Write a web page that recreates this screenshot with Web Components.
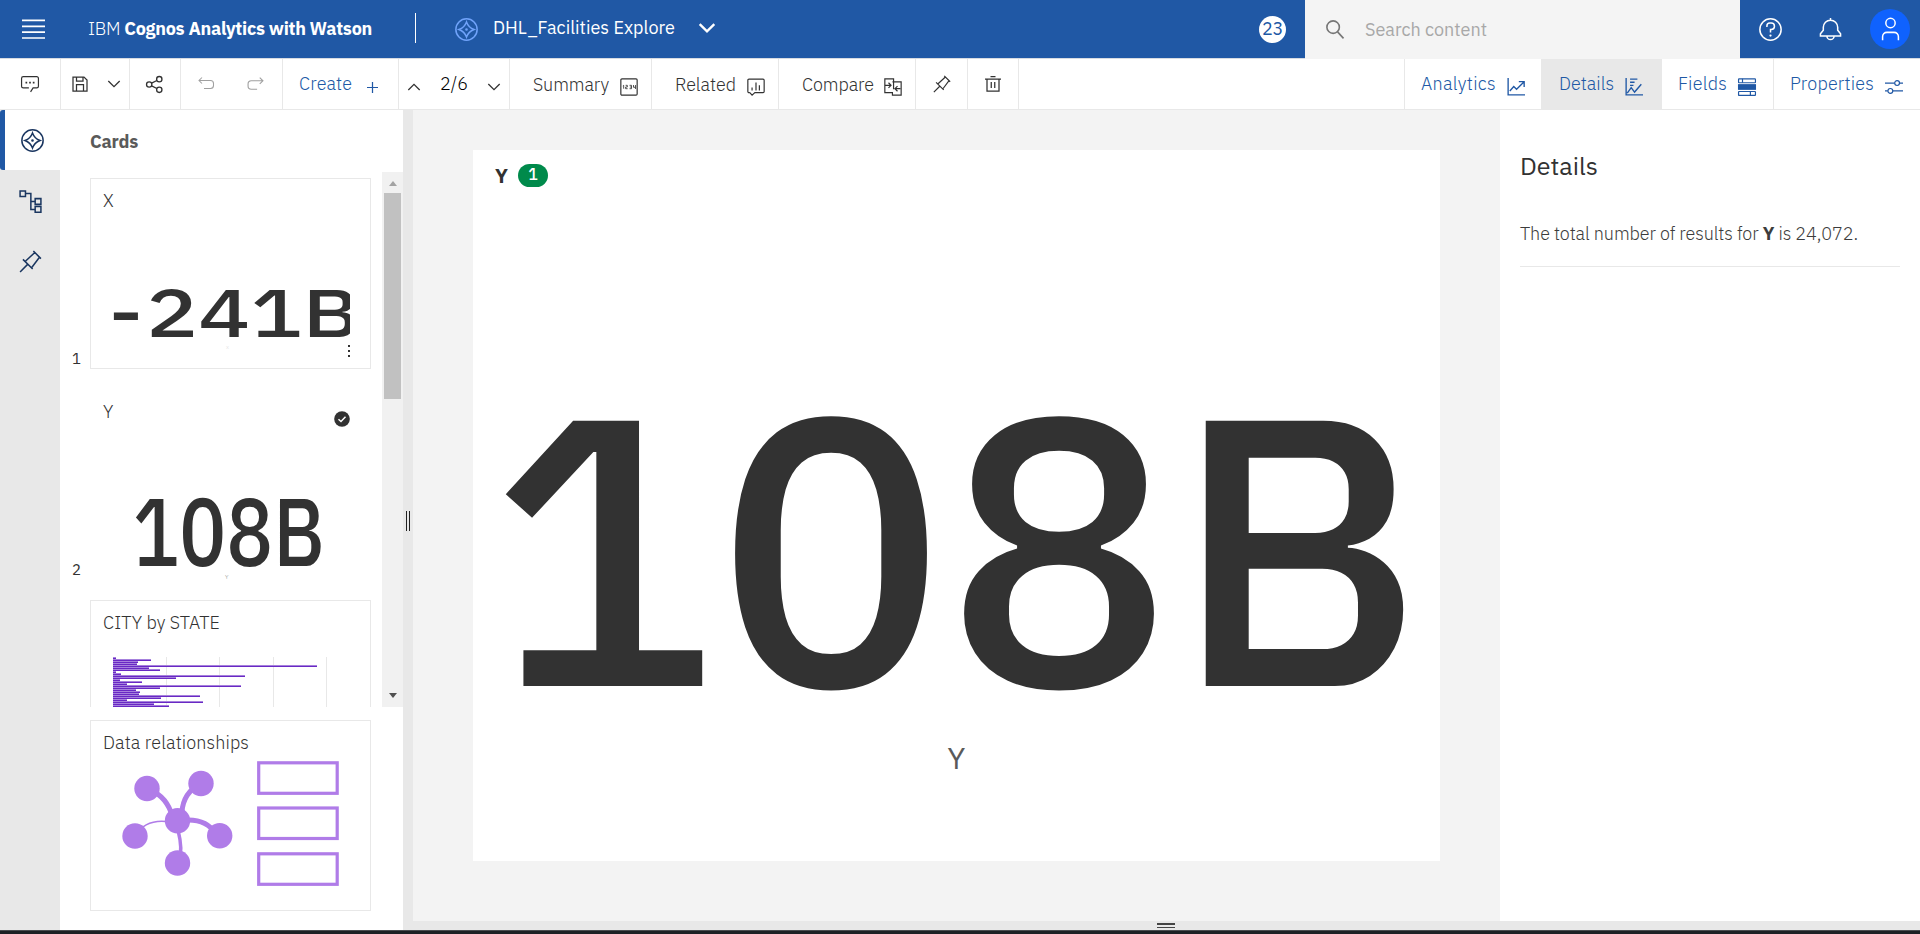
<!DOCTYPE html>
<html lang="en"><head><meta charset="utf-8"><title>DHL_Facilities Explore</title>
<style>html,body{margin:0;height:100%;overflow:hidden}body{font-family:"IBM Plex Sans",Roboto,"Open Sans",sans-serif;font-size:18px;font-weight:300;line-height:24px;color:#323232;background:#fff}</style></head>
<body><explore-app></explore-app>
<script>
const ICONS={
menu:'<path d="M0 2h32M0 10.2h32M0 18.2h32M0 26.4h32" stroke-width="2.3"/>',
explore:'<circle cx="16" cy="16" r="14.8"/><path d="M16 5.500C18 11 21 14 26.500 16C21 18 18 21 16 26.500C14 21 11 18 5.500 16C11 14 14 11 16 5.500Z"/><circle cx="16" cy="16" r=".8" fill="currentColor"/>',
comment:'<path d="M17 30l4.500-7H28a3 3 0 0 0 3-3V6a3 3 0 0 0-3-3H4a3 3 0 0 0-3 3v14a3 3 0 0 0 3 3h10"/><path d="M8 12h3v3H8zM14.500 12h3v3h-3zM21 12h3v3h-3z" fill="currentColor" stroke="none"/>',
save:'<path d="M2 2h22l6 6v22H2zM9 2v8h13V2M9 30V17h14v13"/>',
down:'<path d="M3 9l13 13L29 9"/>',up:'<path d="M3 23l13-13L29 23"/>',
share:'<circle cx="25" cy="6" r="5"/><circle cx="25" cy="26" r="5"/><circle cx="6" cy="16" r="5"/><path d="M10.500 13.500l10-5M10.500 18.500l10 5"/>',
undo:'<path d="M8 3L2 9l6 6M2 9h23a6 6 0 0 1 6 6v4a6 6 0 0 1-6 6H12"/>',
redo:'<path d="M24 3l6 6-6 6M30 9H8a6 6 0 0 0-6 6v4a6 6 0 0 0 6 6h11"/>',
plus:'<path d="M16 0v32M0 16h32" stroke-width="3.600"/>',
summary:'<rect x="1.500" y="1.500" width="29" height="29" rx="2"/><path d="M5 14l1.500-1V19M10 13h3v3h-3v3h3.500M17 13h3.500v6H17M17.500 16h3M24 12.500v4h3.500M27.500 12.500v7" stroke-width="1.500"/>',
related:'<path d="M5 26H3.500A2 2 0 0 1 1.500 24V4a2 2 0 0 1 2-2h25a2 2 0 0 1 2 2v20a2 2 0 0 1-2 2H14l-5 4.500L5 26M9 22v-5M16 22V8M22 22v-9"/>',
compare:'<path d="M16 26H1.500V1.500H17V7M15 7h15.500v23.500H15V26M17 7v13M2 13h10M8 8.500l4.500 4.500L8 17.500M29 19H20M24 14.500L19.500 19l4.500 4.500"/>',
pin:'<path d="M20 1.500l10.500 10.500M22 3.500l-13.500 12.500M28.500 10L18 24M5.500 13L19 26.500M12 20L1.500 30.500"/>',
trash:'<path d="M0 6h32M4 6v24h24V6M11 1h10M12.500 12v12M19.500 12v12"/>',
line:'<path d="M2 0v30h30M5 23l7-8 5 5L30 7M21 6.500h9.500V16"/>',
details:'<path d="M2 0v30h30M9 2h13M9 7.500h8M9 13h6M4 27l7-10 6 8 12-14"/>',
fields:'<rect x="1" y="1.500" width="30" height="7" rx="1"/><rect x="1" y="12" width="30" height="8" fill="currentColor"/><rect x="1" y="24" width="30" height="7" rx="1"/><path d="M8 1.500v7M22 24v7"/>',
sliders:'<path d="M0 9h17M26 9h6M0 23h5M14 23h18"/><circle cx="21.500" cy="9" r="4.300"/><circle cx="9.500" cy="23" r="4.300"/>',
search:'<circle cx="12" cy="12" r="10.500"/><path d="M19.500 20l10 11"/>',
help:'<circle cx="16" cy="16" r="14.800"/><path d="M11 12.500V11a4 4 0 0 1 4-4h2a4.500 4.500 0 0 1 0 9h-1v4"/><circle cx="16" cy="24.500" r="1.600" fill="currentColor" stroke="none"/>',
bell:'<path d="M16 0v4M2 25v-3l4-5v-4a10 10 0 0 1 20 0v4l4 5v3zM11 25a5 5 0 0 0 10 0"/>',
user:'<circle cx="16" cy="7" r="6.500"/><path d="M5 31v-5a6 6 0 0 1 6-6h10a6 6 0 0 1 6 6v5"/>',
tree:'<path d="M1.500 1.500h7.500v7.500h-7.500zM22.500 12h8v8h-8zM22.500 23h8v8h-8zM9 5h7.500v22h6M16.500 16h6"/>'
};
const make=(name,css,html,after)=>customElements.define(name,class extends HTMLElement{
 connectedCallback(){ if(this.shadowRoot)return; const r=this.attachShadow({mode:'open'}); r.innerHTML=`<style>*{box-sizing:border-box}${css}</style>`+(typeof html==='function'?html(this):html); after&&after(this,r); }
});
/* Text run whose tracking is adjusted to fill a given width */
make('fit-text',':host{display:block;white-space:nowrap;flex:none}span{display:inline-block}','<span><slot></slot></span>',(h,r)=>{
 const w=+h.getAttribute('w'); h.style.width=w+'px'; const s=r.querySelector('span'), n=h.textContent.length;
 if(n>1) s.style.letterSpacing=((w-s.getBoundingClientRect().width)/n).toFixed(3)+'px';
});
make('ui-icon',':host{display:block;flex:none}svg{display:block;overflow:visible}',h=>{const s=h.getAttribute('size')||18;return `<svg width="${s}" height="${s}" viewBox="0 0 32 32" fill="none" stroke="currentColor" stroke-width="${h.getAttribute('sw')||2.1}">${ICONS[h.getAttribute('name')]}</svg>`});

make('app-header',`:host{display:flex;height:59px;background:#2058a5;border-bottom:1px solid #d7dbe2;color:#fff;align-items:center}
b{font-weight:700}.div{width:1px;height:30px;background:#fff;margin:-2px 39px 0 43px}.count{width:27px;height:27px;border-radius:50%;background:#fff;color:#2058a5;display:grid;place-items:center;margin-left:auto;margin-right:19px}
.search{width:435px;height:59px;background:#f4f4f4;display:flex;align-items:center;padding:0 0 0 21px;gap:20px;color:#a8a8a8;margin-bottom:-1px;font-weight:400}.search ui-icon{color:#767676}
.act{width:180px;display:flex;align-items:center;padding-left:19px}.user{width:40px;height:40px;border-radius:50%;background:#0f62fe;display:grid;place-items:center;margin-left:28px}`,
`<ui-icon name="menu" size="23" style="margin:0 43px 0 22px;padding-top:2px"></ui-icon><fit-text w="284">IBM <b>Cognos Analytics with Watson</b></fit-text><div class="div"></div>
<ui-icon name="explore" size="23" style="color:#70a3fa"></ui-icon><fit-text w="182" style="margin:-2px 23px 0 15px;font-weight:400">DHL_Facilities Explore</fit-text><ui-icon name="down" size="18" sw="4.200" style="margin-top:-2px"></ui-icon>
<div class="count"><fit-text w="21" style="font-weight:400">23</fit-text></div><div class="search"><ui-icon name="search" size="19" sw="2.700"></ui-icon><fit-text w="122">Search content</fit-text></div>
<div class="act"><ui-icon name="help" size="23"></ui-icon><ui-icon name="bell" size="23" style="margin-left:37px"></ui-icon><div class="user"><ui-icon name="user" size="23"></ui-icon></div></div>`);

make('tool-item',`:host{display:flex;align-items:center;height:50px;border-right:1px solid #e8e8e8;flex:none;box-sizing:border-box}:host([selected]){background:#e8e8e8}`,'<slot></slot>',h=>{h.style.width=h.getAttribute('width')+'px';h.style.paddingLeft=h.getAttribute('pad')+'px'});
make('app-toolbar',`:host{display:flex;height:51px;border-bottom:1px solid #e8e8e8;background:#fff;box-sizing:border-box}.right{margin-left:auto;display:flex;border-left:1px solid #e8e8e8;color:#2058a5}
.right tool-item:last-child{border:0}.right ui-icon{margin:6px 0 0 11px}.l ui-icon{margin:5px 0 0 11px}.dim{color:#a0a0a0}`,
`<tool-item width="61" pad="21"><ui-icon name="comment"></ui-icon></tool-item>
<tool-item width="69" pad="11"><ui-icon name="save" size="16" sw="2.500"></ui-icon><ui-icon name="down" size="14" sw="3" style="margin-left:19px"></ui-icon></tool-item>
<tool-item width="51" pad="16"><ui-icon name="share" size="17" sw="2.500"></ui-icon></tool-item>
<tool-item width="102" pad="17" class="dim"><ui-icon name="undo" size="16"></ui-icon><ui-icon name="redo" size="17" style="margin-left:33px"></ui-icon></tool-item>
<tool-item width="116" pad="16" style="color:#2058a5"><fit-text w="53">Create</fit-text><ui-icon name="plus" size="11" style="margin:6px 0 0 15px"></ui-icon></tool-item>
<tool-item width="111" pad="8"><ui-icon name="up" size="14" sw="3" style="margin-top:5px"></ui-icon><fit-text w="28" style="margin:0 19px 0 19px;color:#000">2/6</fit-text><ui-icon name="down" size="14" sw="3" style="margin-top:5px"></ui-icon></tool-item>
<tool-item class="l" width="142" pad="23"><fit-text w="76" style="margin-top:2px">Summary</fit-text><ui-icon name="summary"></ui-icon></tool-item>
<tool-item class="l" width="127" pad="23"><fit-text w="61" style="margin-top:2px">Related</fit-text><ui-icon name="related"></ui-icon></tool-item>
<tool-item class="l" width="137" pad="23"><fit-text w="72" style="margin-top:2px">Compare</fit-text><ui-icon name="compare" style="margin-left:10px"></ui-icon></tool-item>
<tool-item width="52" pad="17"><ui-icon name="pin"></ui-icon></tool-item><tool-item width="51" pad="17"><ui-icon name="trash" size="16" sw="2.500"></ui-icon></tool-item>
<div class="right"><tool-item width="137" pad="16"><fit-text w="75">Analytics</fit-text><ui-icon name="line" sw="2.400"></ui-icon></tool-item>
<tool-item selected width="120" pad="17"><fit-text w="55">Details</fit-text><ui-icon name="details" sw="2.400"></ui-icon></tool-item>
<tool-item width="112" pad="16"><fit-text w="49">Fields</fit-text><ui-icon name="fields"></ui-icon></tool-item>
<tool-item width="146" pad="16"><fit-text w="84">Properties</fit-text><ui-icon name="sliders"></ui-icon></tool-item></div>`);

make('side-rail',`:host{display:flex;flex-direction:column;width:60px;background:#e8e8e8;color:#1a3660}div{height:60px;display:flex;align-items:center;padding-left:19px;flex:none}.on{background:#fff;border-left:5px solid #2058a5;padding-left:16px;border-radius:3px 0 0 3px}div+div{padding-top:2px}`,
`<div class="on"><ui-icon name="explore" size="23"></ui-icon></div><div><ui-icon name="tree" size="23"></ui-icon></div><div><ui-icon name="pin" size="23"></ui-icon></div>`);

/* Headline figure: viewBox given by the host, stretched to its box */
make('big-number',':host{display:block}svg{display:block;width:100%;height:100%;overflow:visible}:host([clip]) svg{overflow:hidden}text{font-weight:500;fill:#323232}',
h=>`<svg viewBox="${h.getAttribute('box')}" preserveAspectRatio="none"><text x="${h.getAttribute('xs')}" y="${h.getAttribute('base')}" font-size="${h.getAttribute('fs')}">${h.getAttribute('value')}</text></svg>`);

make('viz-card',`:host{display:grid;grid-template-columns:30px 281px;height:191px;margin-bottom:20px;flex:none}.no{font-size:15px;line-height:20px;align-self:end;padding:0 0 0 12px;font-weight:400}
.box{border:1px solid #e8e8e8;position:relative;height:191px;overflow:hidden;padding:10px 0 0 12px}:host([current]) .box{border-color:transparent}`,
h=>`<div class="no">${h.getAttribute('no')||''}</div><div class="box"><fit-text w="${h.getAttribute('tw')}">${h.getAttribute('label')}</fit-text><slot></slot></div>`);

const bars=[198,303,264,261,801,297,330,199,213,585,378,210,276,231,573,329,258,270,267,450,332,230,459,312,357,267];
make('bar-chart',':host{display:block}svg{display:block}',()=>`<svg width="230" height="60" viewBox="113 657 230 60" shape-rendering="crispEdges">${[166,219,273,326].map((x,i)=>`<path d="M${x+.5} 657v60" stroke="#e8e8e8" stroke-width="${i==3?1:1.6}"/>`).join('')}${bars.map((e,i)=>`<rect x="113" y="${657+2*i}" width="${(e/3-63).toFixed(1)}" height="2" fill="#a681dd"/><rect x="113" y="${657+2*i+1}" width="${(e/3-63).toFixed(1)}" height="1" fill="#6929c4"/>`).join('')}</svg>`);
make('relation-map',':host{display:block}svg{display:block}',()=>`<svg width="260" height="140" viewBox="100 755 260 140" fill="none" stroke="#b07ce8"><path d="M147 789Q164 794 171 812" stroke-width="5"/><path d="M201 783Q183 793 182 812" stroke-width="5"/><path d="M135 836Q146 818 170 822" stroke-width="1.500"/><path d="M177 821Q205 816 216 834" stroke-width="5"/><path d="M178 830Q183 850 179 860" stroke-width="3.500"/>
${[[177.5,820.7],[147,788.5],[201,783.5],[135,836],[219.700,835.700],[177.500,863]].map(p=>`<circle cx="${p[0]}" cy="${p[1]}" r="12.700" fill="#b07ce8" stroke="none"/>`).join('')}
${[762.800,808,853.800].map(y=>`<rect x="258.700" y="${y}" width="78.500" height="30.500" stroke-width="3.200"/>`).join('')}</svg>`);

make('card-panel',`:host{display:flex;flex-direction:column;width:343px;background:#fff}h2{margin:0;height:62px;padding:20px 0 0 30px;font-size:18px;font-weight:700;color:#5a5a5a;line-height:24px;flex:none}
.scroll{display:flex;height:535px;overflow:hidden;flex:none}.list{flex:1;padding-top:6px;display:flex;flex-direction:column;overflow:hidden}.bar{width:21px;background:#f1f1f1;display:flex;flex-direction:column;align-items:center}
.bar i{width:0;border:4.500px solid transparent;border-top:0;border-bottom:5px solid #a3a3a3;margin:9px 0 7px}.bar b{width:17px;height:206px;background:#c1c1c1}.bar i.d{border-bottom:0;border-top:5px solid #505050;margin:auto 0 9px}
.over{position:absolute}.tiny{font-size:6px;line-height:8px;color:#888}.foot{padding-top:13px}
.dots{display:flex;flex-direction:column;gap:3px}.dots u{width:2px;height:2px;background:#323232}`,
`<h2><fit-text w="48">Cards</fit-text></h2><div class="scroll"><div class="list">
<viz-card no="1" label="X" tw="12"><big-number clip class="over" style="left:22px;top:101px;width:237px;height:66px" box="0 280 183.700 66" value="-241B" xs="-3.400 25.500 66 106.500 146.900" base="337.500" fs="67.300"></big-number><span class="over tiny" style="left:135px;top:164px;color:#ddd">x</span><div class="over dots" style="left:257px;top:166px"><u></u><u></u><u></u></div></viz-card>
<viz-card no="2" label="Y" tw="12" current><big-number class="over" style="left:41px;top:103px;width:195px;height:92px" box="487 394 947 367" value="108B" xs="489" base="686" fs="380"></big-number><span class="over tiny" style="left:134px;top:183px">Y</span>
<svg class="over" style="left:242.500px;top:21px" width="16" height="16" viewBox="0 0 16 16"><circle cx="8" cy="8" r="7.800" fill="#323232"/><path d="M4.500 8.200l2.500 2.300 4.500-4.700" fill="none" stroke="#fff" stroke-width="1.500"/></svg></viz-card>
<viz-card label="CITY by STATE" tw="117"><bar-chart class="over" style="left:22px;top:56px"></bar-chart></viz-card></div>
<div class="bar"><i></i><b></b><i class="d"></i></div></div>
<div class="foot"><viz-card label="Data relationships" tw="146" style="margin:0"><relation-map class="over" style="left:9px;top:34px"></relation-map></viz-card></div>`);

make('split-handle',`:host{display:flex;background:#e8e8e8;justify-content:center;align-items:center;gap:2px;box-sizing:border-box}i{width:1px;height:20px;background:#222}:host([flat]){flex-direction:column}:host([flat]) i{width:18px;height:1.500px;background:#444}`,'<i></i><i></i>');
make('viz-canvas',`:host{display:block;flex:1;background:#f3f3f3;padding:40px 60px 60px}.sheet{height:711px;background:#fff;padding:14px 0 0 22px;display:flex;flex-direction:column}
.top{display:flex;align-items:center;gap:10px;height:23px}.top b{font-size:20px;font-weight:700;width:13px}.pill{width:30px;height:23px;border-radius:11.500px;background:#008a4b;color:#fff;font-size:16px;line-height:21px;text-align:center;font-weight:500}
big-number{width:947px;height:367px;margin:207px 0 0 -8px;flex:none}.cap{font-size:30px;line-height:36px;text-align:center;margin:-21px 22px 0 0;color:#5a5a5a;font-weight:400}`,
`<div class="sheet"><div class="top"><b>Y</b><span class="pill">1</span></div><big-number box="487 394 947 367" value="108B" xs="489" base="686" fs="380"></big-number><div class="cap">Y</div></div>`);
make('details-panel',`:host{display:block;width:420px;background:#fff;padding:38px 20px 0;box-sizing:border-box}h1{margin:0;font-size:25px;line-height:36px;font-weight:400;color:#323232}.p{margin-top:38px;padding:0 0 20px;border-bottom:1px solid #e8e8e8;line-height:24px;color:#3c3c3c}b{font-weight:700}`,
`<h1><fit-text w="78">Details</fit-text></h1><div class="p"><fit-text w="338">The total number of results for <b>Y</b> is 24,072.</fit-text></div>`);
make('explore-app',`:host{display:flex;flex-direction:column;height:934px;width:1920px}.main{display:flex;height:820px}.work{flex:1;display:grid;grid-template-rows:811px 9px;min-width:0}.row{display:flex}.v{width:10px;padding-top:2px;padding-right:1px}.base{height:4px;background:#1d2125;border-top:1px solid #4a4d50}app-header{box-sizing:border-box}`,
`<app-header></app-header><app-toolbar></app-toolbar><div class="main"><side-rail></side-rail><card-panel></card-panel><split-handle class="v"></split-handle><div class="work"><div class="row"><viz-canvas></viz-canvas><details-panel></details-panel></div><split-handle flat style="padding-right:2px"></split-handle></div></div><div class="base"></div>`);
</script></body></html>
